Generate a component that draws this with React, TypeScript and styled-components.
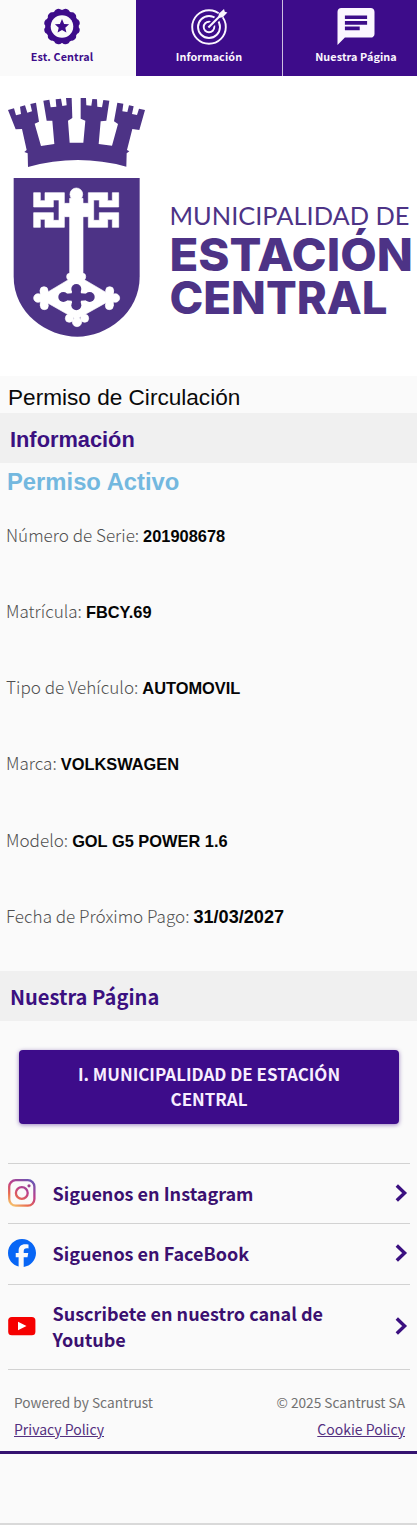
import React from "react";
import styled, { createGlobalStyle } from "styled-components";
import { MdChat } from "react-icons/md";
import { FaFacebook } from "react-icons/fa6";

const GlobalStyle = createGlobalStyle`
  * {
    box-sizing: border-box;
  }
  body {
    margin: 0;
    background: #fafafa;
    font-family: "Noto Sans CJK SC", "Open Sans", sans-serif;
  }
`;

const Page = styled.main`
  width: 417px;
  height: 1525px;
  overflow: hidden;
  display: flex;
  flex-direction: column;
  border-bottom: 2px solid #d9d9d9;
`;

const Tabs = styled.nav`
  display: flex;
  flex: none;
  height: 77px;
  margin-left: -11px;
  width: 440px;
  background: #fff;
`;

const Tab = styled.button<{ $active?: boolean }>`
  flex: none;
  width: 147px;
  height: 76.4px;
  padding: 8px 0 0;
  border: 0;
  border-right: 1px solid ${({ $active }) => ($active ? "#fafafa" : "#cdbfe0")};
  display: flex;
  flex-direction: column;
  align-items: center;
  font-family: inherit;
  background: ${({ $active }) => ($active ? "#fafafa" : "#3d0c8a")};
  color: ${({ $active }) => ($active ? "#3d0c8a" : "#fbf6ff")};

  svg {
    flex: none;
    height: 37px;
    overflow: visible;
  }
`;

const TabLabel = styled.span`
  margin-top: 2.5px;
  font-size: 10.8px;
  font-weight: 700;
  line-height: 16px;
  letter-spacing: 0.1px;
  white-space: nowrap;
`;

const Banner = styled.header`
  flex: none;
  height: 299px;
  background: #fff;

  svg {
    display: block;
  }
`;

const Title = styled.h1`
  margin: 0;
  padding-left: 8px;
  height: 37px;
  flex: none;
  font: 400 22.6px/43px "Liberation Sans", Arial, sans-serif;
  color: #0a0a0a;
`;

const SectionBar = styled.h2<{ $arial?: boolean }>`
  margin: 0;
  padding-left: 10px;
  height: 50px;
  flex: none;
  background: #f0f0f0;
  color: #3b1080;
  font-family: ${({ $arial }) =>
    $arial ? `"Liberation Sans", Arial, sans-serif` : "inherit"};
  font-size: ${({ $arial }) => ($arial ? "21.8px" : "20.1px")};
  font-weight: 700;
  line-height: ${({ $arial }) => ($arial ? "53px" : "51px")};
`;

const Status = styled.p`
  margin: 0;
  padding-left: 7px;
  height: 35px;
  flex: none;
  color: #73b8df;
  font: 700 23.8px/38px "Liberation Sans", Arial, sans-serif;
`;

const Fields = styled.dl`
  margin: -1px 0 0;
  flex: none;
  height: 474px;
  padding-left: 6px;
`;

const Field = styled.div`
  display: flex;
  align-items: baseline;
  gap: 4px;
  height: 76.15px;
  line-height: 75.5px;
  white-space: nowrap;
`;

const FieldName = styled.dt`
  font-size: 17.1px;
  font-weight: 300;
  color: #505050;
`;

const FieldValue = styled.dd<{ $large?: boolean }>`
  margin: 0;
  font-family: "Liberation Sans", Arial, sans-serif;
  font-size: ${({ $large }) => ($large ? "18.1px" : "16.4px")};
  font-weight: 700;
  color: #050505;
`;

const SiteButton = styled.button`
  flex: none;
  margin: 29px 18px 39px 19px;
  height: 74px;
  padding: 0 50px 2px;
  border: 0;
  border-radius: 4px;
  background: #3d0c8a;
  box-shadow: 0 1px 4px rgba(61, 12, 138, 0.5);
  color: #f8eeff;
  font-family: inherit;
  font-size: 16.95px;
  font-weight: 700;
  line-height: 25px;
`;

const Links = styled.ul`
  list-style: none;
  margin: 0 7px 0 8px;
  padding: 0;
  flex: none;
  border-top: 1px solid #d2d2d2;
`;

const LinkRow = styled.li<{ $tall?: boolean }>`
  display: grid;
  grid-template-columns: 28px 1fr 15px;
  column-gap: 16.5px;
  align-items: center;
  height: ${({ $tall }) => ($tall ? "85.5px" : "60.25px")};
  padding-bottom: 1px;
  border-bottom: 1px solid #d2d2d2;
  color: #3b1070;
`;

const LinkText = styled.span`
  padding-bottom: 1px;
  font-size: 18px;
  font-weight: 700;
  line-height: 26px;
`;

const Footer = styled.footer`
  display: flex;
  justify-content: space-between;
  flex: none;
  height: 84px;
  padding: 19px 12px 0 14px;
  border-bottom: 3px solid #351370;
  font-size: 13.7px;
  line-height: 27px;
  color: #717171;
`;

const FooterColumn = styled.div<{ $end?: boolean }>`
  display: flex;
  flex-direction: column;
  align-items: ${({ $end }) => ($end ? "flex-end" : "flex-start")};
`;

const FooterLink = styled.a`
  font-size: 14px;
  color: #543080;
  text-decoration: underline;
`;

const fields = [
  { name: "Número de Serie:", value: "201908678" },
  { name: "Matrícula:", value: "FBCY.69" },
  { name: "Tipo de Vehículo:", value: "AUTOMOVIL" },
  { name: "Marca:", value: "VOLKSWAGEN" },
  { name: "Modelo:", value: "GOL G5 POWER 1.6" },
  { name: "Fecha de Próximo Pago:", value: "31/03/2027", large: true },
];

const lobes = Array.from({ length: 12 }, (_, i) => 15 + i * 30);

const SealIcon = () => (
  <svg width="38" height="37" viewBox="-19 -18.5 38 37" fill="currentColor">
    <circle r="16.8" />
    {lobes.map((angle) => (
      <circle key={angle} cy="-14.4" r="3.8" transform={`rotate(${angle})`} />
    ))}
    <circle r="11.3" fill="#fafafa" />
    <path d="M0-7.4L2.1-2.6L7.1-2.2L3.3 1.2L4.4 6.1L0 3.5L-4.4 6.1L-3.3 1.2L-7.1-2.2L-2.1-2.6Z" />
  </svg>
);

const TargetIcon = () => (
  <svg width="38" height="37" viewBox="-19 -19 38 37" fill="none">
    <g stroke="currentColor" strokeWidth="1.9">
      <circle r="16.8" />
      <circle r="11" />
      <circle r="5.3" />
    </g>
    <path d="M1-1L14-14" stroke="#3d0c8a" strokeWidth="5.6" />
    <path d="M-.6.6L13-13" stroke="currentColor" strokeWidth="2.1" />
    <path
      d="M9-9L10-13.6L15-18L15.8-15.3L18.4-14.4L13.8-9.8Z"
      fill="currentColor"
    />
  </svg>
);

const InstagramIcon = () => (
  <svg width="28" height="28" viewBox="0 0 28 28" fill="none">
    <defs>
      <linearGradient id="ig" x1="4" y1="28" x2="22" y2="0" gradientUnits="userSpaceOnUse">
        <stop offset="0" stopColor="#f8cf70" />
        <stop offset=".3" stopColor="#e8694f" />
        <stop offset=".6" stopColor="#bd3f8b" />
        <stop offset="1" stopColor="#6657b5" />
      </linearGradient>
    </defs>
    <g stroke="url(#ig)" strokeWidth="2.3">
      <rect x="1.2" y="1.2" width="25.2" height="25.4" rx="6.5" />
      <circle cx="13.8" cy="14" r="5.9" />
    </g>
    <circle cx="21" cy="6.8" r="1.6" fill="#9e408f" />
  </svg>
);

const YoutubeIcon = () => (
  <svg width="28" height="20" viewBox="0 0 28 20">
    <rect x="0.2" y="0.9" width="27.2" height="18.4" rx="3.6" fill="#f60000" />
    <path d="M10 5.7L18.5 10L10 14.3Z" fill="#fff" />
  </svg>
);

const Chevron = () => (
  <svg width="15" height="18" viewBox="0 0 15 18">
    <path d="M1.8 1.5L9.6 9L1.8 16.5" fill="none" stroke="#3b1080" strokeWidth="3.4" />
  </svg>
);

const MunicipalLogo = () => (
  <svg width="417" height="299" viewBox="0 77 417 299" fill="#4d3386">
    <g transform="translate(0 90) scale(.33333)">
      <path d="M24 60L42 55L48 76L63 72L60 50L75 46L82 68L96 64L91 42L108 38L117 95L104 101L123 168L163 162L157 92L140 92L130 32L148 29L152 52L169 50L167 28L183 26L187 48L200 46L198 24H215L217 84L204 92L209 158H250L256 92L242 86V24H258L259 46L274 47L277 27L291 28L292 50L306 52L310 30L328 32L319 92L302 94L296 162L336 167L354 102L342 94L352 38L370 41L367 64L382 66L387 46L401 49L396 72L411 75L417 56L435 60L418 120L397 117L381 180L388 184L380 190L379 230Q232 190 84 231L83 190L73 186L80 180L66 117L47 118Z" />
    </g>
    <g transform="translate(0 170) scale(.33333)">
      <path d="M41 24H419V320C419 430 320 499 232 500C140 499 41 430 41 320Z" />
      <g fill="#fff" stroke="#fff" strokeWidth="2" strokeLinejoin="round">
        <circle cx="229" cy="73" r="19" />
        <path d="M209 85H249V330H209Z" />
        <path d="M101 68H121V92H135V68H193V100H265V68H323V92H337V68H356V111H298V90H281V151H298V128H356V172H337V148H323V172H265V140H193V172H135V148H121V172H101V128H160V151H177V90H160V111H101Z" />
        <rect x="200" y="310" width="57" height="20" rx="9" />
        <path d="M229 315L345 383L229 448L115 383Z" />
        <circle cx="132" cy="362" r="12" />
        <circle cx="133" cy="407" r="12" />
        <circle cx="114" cy="384" r="13" />
        <circle cx="329" cy="362" r="12" />
        <circle cx="328" cy="407" r="12" />
        <circle cx="346" cy="384" r="13" />
        <circle cx="208" cy="445" r="12" />
        <circle cx="254" cy="445" r="12" />
        <circle cx="231" cy="456" r="14" />
        <path d="M121 362H143V407H121ZM318 362H340V407H318Z" />
      </g>
      <circle cx="229" cy="357" r="15" />
      <circle cx="229" cy="406" r="15" />
      <circle cx="190" cy="381" r="15" />
      <circle cx="269" cy="381" r="15" />
      <path d="M218 357H240L243 370L269 372V390L243 392L240 406H218L215 392L190 390V372L215 370Z" />
    </g>
    <text
      x="169.5"
      y="224.7"
      fontFamily="Lato, sans-serif"
      fontSize="24.4"
      textLength="240"
      lengthAdjust="spacingAndGlyphs"
    >
      MUNICIPALIDAD DE
    </text>
    <g fontFamily="Inter, sans-serif" fontWeight="800" fontSize="45.5">
      <text x="169.5" y="270.5" textLength="243.5" lengthAdjust="spacingAndGlyphs">
        ESTACIÓN
      </text>
      <text x="169.5" y="314" textLength="218" lengthAdjust="spacingAndGlyphs">
        CENTRAL
      </text>
    </g>
  </svg>
);

const App = () => {
  return (
    <>
      <GlobalStyle />
      <Page>
        <Tabs>
          <Tab $active>
            <SealIcon />
            <TabLabel>Est. Central</TabLabel>
          </Tab>
          <Tab>
            <TargetIcon />
            <TabLabel>Información</TabLabel>
          </Tab>
          <Tab>
            <MdChat size={44} viewBox="2 2 20 20" />
            <TabLabel>Nuestra Página</TabLabel>
          </Tab>
        </Tabs>
        <Banner>
          <MunicipalLogo />
        </Banner>
        <Title>Permiso de Circulación</Title>
        <SectionBar $arial>Información</SectionBar>
        <Status>Permiso Activo</Status>
        <Fields>
          {fields.map(({ name, value, large }) => (
            <Field key={name}>
              <FieldName>{name}</FieldName>
              <FieldValue $large={large}>{value}</FieldValue>
            </Field>
          ))}
        </Fields>
        <SectionBar>Nuestra Página</SectionBar>
        <SiteButton>I. MUNICIPALIDAD DE ESTACIÓN CENTRAL</SiteButton>
        <Links>
          <LinkRow>
            <InstagramIcon />
            <LinkText>Siguenos en Instagram</LinkText>
            <Chevron />
          </LinkRow>
          <LinkRow>
            <FaFacebook size={28} color="#0866f5" />
            <LinkText>Siguenos en FaceBook</LinkText>
            <Chevron />
          </LinkRow>
          <LinkRow $tall>
            <YoutubeIcon />
            <LinkText>Suscribete en nuestro canal de Youtube</LinkText>
            <Chevron />
          </LinkRow>
        </Links>
        <Footer>
          <FooterColumn>
            <span>Powered by Scantrust</span>
            <FooterLink>Privacy Policy</FooterLink>
          </FooterColumn>
          <FooterColumn $end>
            <span>© 2025 Scantrust SA</span>
            <FooterLink>Cookie Policy</FooterLink>
          </FooterColumn>
        </Footer>
      </Page>
    </>
  );
};

export default App;
